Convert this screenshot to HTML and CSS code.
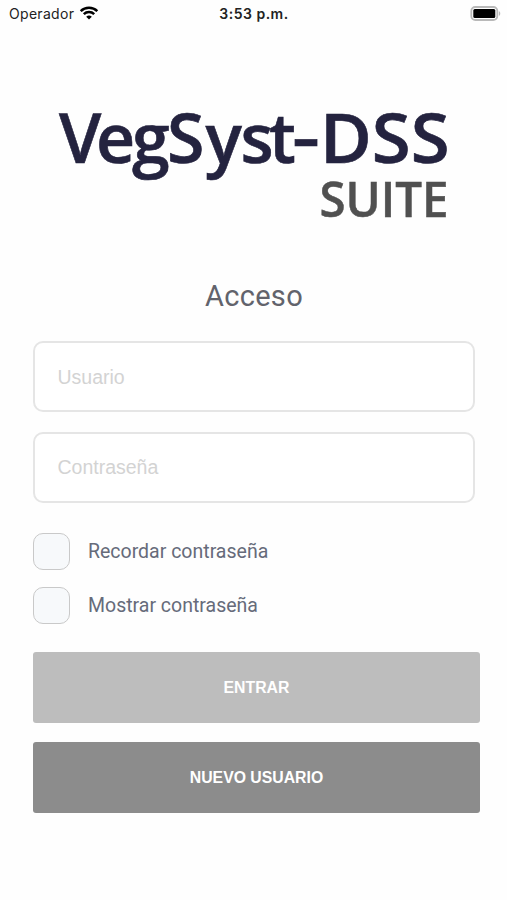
FILE: index.html
```html
<!DOCTYPE html>
<html lang="es">
<head>
    <meta charset="UTF-8">
    <meta name="viewport" content="width=device-width, initial-scale=1.0">
    <title>VegSyst-DSS Suite</title>
    <link rel="stylesheet" href="styles.css">
</head>
<body>
    <header class="status-bar">
        <div class="carrier">
            <span>Operador</span>
            <svg class="wifi" width="20" height="14" viewBox="0 0 20 14">
                <path d="M1.7 5.1a12 12 0 0 1 16.6 0M4.8 8.2a7.5 7.5 0 0 1 10.4 0" fill="none" stroke="#000" stroke-width="2.5"/>
                <path d="M10 13.6L7.2 10.8a4 4 0 0 1 5.6 0z"/>
            </svg>
        </div>
        <span class="clock">3:53 p.m.</span>
        <svg class="battery" width="31" height="15" viewBox="0 0 31 15">
            <rect x="1.3" y="1" width="26" height="13" rx="4" fill="#fff" stroke="#b9b9b9" stroke-width="1.8"/>
            <rect x="3.3" y="3" width="22" height="9" rx="1.5"/>
            <path d="M28.9 5.2c1.8.6 1.8 4 0 4.6z" fill="#b9b9b9"/>
        </svg>
    </header>

    <svg class="logo" width="507" height="140" viewBox="0 0 507 140">
        <text class="logo-name" y="73"><tspan x="59 96 132 167 205.5 240.5 269">VegSyst</tspan><tspan x="292" dy="-2" textLength="28" lengthAdjust="spacingAndGlyphs">-</tspan><tspan x="320" dy="2" textLength="129.5" lengthAdjust="spacingAndGlyphs">DSS</tspan></text>
        <text class="logo-suite" x="319.5" y="127" textLength="129" lengthAdjust="spacingAndGlyphs">SUITE</text>
    </svg>

    <form class="login">
        <h1>Acceso</h1>
        <input class="field" type="text" name="usuario" placeholder="Usuario">
        <input class="field" type="password" name="password" placeholder="Contraseña">

        <label class="option">
            <input type="checkbox" name="recordar">
            <span>Recordar contraseña</span>
        </label>
        <label class="option">
            <input type="checkbox" name="mostrar">
            <span>Mostrar contraseña</span>
        </label>

        <button type="submit" class="btn btn-login">ENTRAR</button>
        <button type="button" class="btn btn-new">NUEVO USUARIO</button>
    </form>
</body>
</html>
```
FILE: styles.css
```css
* {
    box-sizing: border-box;
}

body {
    margin: 0;
    min-height: 900px;
    background-color: #fefefe;
    font-family: Roboto, sans-serif;
}

.status-bar {
    display: grid;
    grid-template-columns: 1fr auto 1fr;
    align-items: center;
    height: 26px;
    padding: 0 6px 0 9px;
    font-family: Inter, sans-serif;
    font-size: 14px;
    color: #222;
}

.carrier {
    display: flex;
    align-items: center;
    gap: 5px;
    letter-spacing: 0.3px;
}

.clock {
    margin-right: 2px;
    font-weight: 600;
    letter-spacing: 0.5px;
}

.battery {
    justify-self: end;
}

.wifi, .battery, .logo {
    display: block;
}

.logo {
    margin-top: 64px;
}

.logo-name, .logo-suite {
    font-family: "Open Sans", sans-serif;
    font-weight: 600;
}

.logo-name {
    font-size: 68px;
    fill: #24233f;
    stroke: #24233f;
    stroke-width: 0.6px;
}

.logo-suite {
    font-size: 49px;
    fill: #505050;
    stroke: #505050;
    stroke-width: 0.5px;
}

.login {
    display: flex;
    flex-direction: column;
    padding: 46px 27px 0 33px;
}

h1 {
    width: 442px;
    margin: 0 0 21px;
    height: 44px;
    line-height: 40px;
    font-size: 29px;
    font-weight: 400;
    letter-spacing: 0.3px;
    text-align: center;
    color: #62636c;
}

.field {
    width: 442px;
    height: 71px;
    margin: 0 0 20px;
    padding: 1px 23px 0 22.5px;
    border: 2px solid #e5e5e5;
    border-radius: 10px;
    background-color: #fff;
    font-family: "Liberation Sans", sans-serif;
    font-size: 19.5px;
}

.field[type="password"] {
    padding: 0 23px 1px 22.5px;
}

.field::placeholder {
    color: #d3d3d3;
}

.option {
    display: flex;
    align-items: center;
    gap: 18px;
    height: 37px;
    margin-bottom: 17px;
    font-size: 19.5px;
    color: #666b7a;
}

.field + .option {
    margin-top: 10px;
}

.option input {
    appearance: none;
    width: 37px;
    height: 37px;
    margin: 0;
    border: 1.5px solid #c9c9c9;
    border-radius: 10px;
    background-color: #f7f9fb;
}

.btn {
    height: 70.5px;
    border: none;
    border-radius: 3px;
    padding: 1px 0 0;
    font-family: "Liberation Sans", sans-serif;
    font-size: 15.8px;
    font-weight: bold;
    color: #fff;
}

.btn-login {
    margin: 11px 0 19.5px;
    background-color: #bdbdbd;
}

.btn-new {
    background-color: #8c8c8c;
}
```
